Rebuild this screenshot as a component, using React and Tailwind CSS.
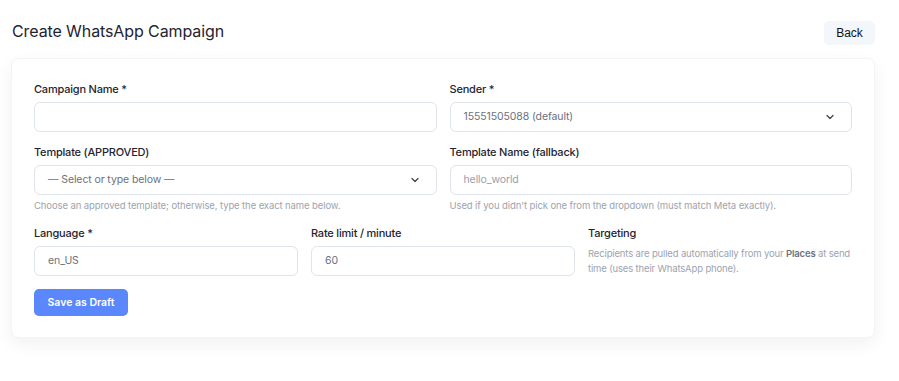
import React from "react";

const font = { fontFamily: "Inter, 'Noto Sans', sans-serif" };

function Chevron() {
  return (
    <svg width="12" height="12" viewBox="0 0 24 24" fill="none" stroke="#374151" strokeWidth="2.4" strokeLinecap="round" strokeLinejoin="round">
      <path d="M6 9l6 6 6-6" />
    </svg>
  );
}

function Label({ children }) {
  return <div className="h-[16px] mb-[5px] text-[11px] leading-[16px] font-medium text-[#1f2430] tracking-[-0.2px]">{children}</div>;
}

function Box({ children, select, placeholder }) {
  return (
    <div className="h-[30px] rounded-[6px] border border-[#dfe3ec] bg-white flex items-center justify-between pl-[13px] pr-[15px]">
      <span className={`text-[10.5px] tracking-[-0.1px] ${placeholder ? "text-[#9aa0ab]" : "text-[#6b7080]"}`}>{children}</span>
      {select && <Chevron />}
    </div>
  );
}

function Help({ children }) {
  return <div className="mt-[4px] text-[9.5px] leading-[14px] tracking-[-0.1px] text-[#9ca3af]">{children}</div>;
}

export default function App() {
  return (
    <div className="w-[899px] h-[381px] bg-white px-[11px] pt-[21px]" style={font}>
      <div className="w-[864px] flex items-start justify-between h-[24px] mb-[13px]">
        <h1 className="ml-[1px] text-[16px] leading-[20px] text-[#1f2430] font-normal tracking-[-0.1px]">Create WhatsApp Campaign</h1>
        <button className="h-[24px] w-[51px] rounded-[5px] bg-[#f3f6fa] text-[12px] text-[#111] flex items-center justify-center" style={{ fontFamily: "'Liberation Sans', Arial, sans-serif" }}>Back</button>
      </div>
      <div className="w-[864px] rounded-[7px] bg-white border border-[#f3f4f6] shadow-[0_6px_18px_rgba(15,23,42,0.06)] px-[22px] pt-[22px] pb-[21px]">
        <div className="grid grid-cols-2 gap-x-[13px] gap-y-[12px]">
          <div>
            <Label>Campaign Name *</Label>
            <Box></Box>
          </div>
          <div>
            <Label>Sender *</Label>
            <Box select>15551505088 (default)</Box>
          </div>
          <div>
            <Label>Template (APPROVED)</Label>
            <Box select>— Select or type below —</Box>
            <Help>Choose an approved template; otherwise, type the exact name below.</Help>
          </div>
          <div>
            <Label>Template Name (fallback)</Label>
            <Box placeholder>hello_world</Box>
            <Help>Used if you didn't pick one from the dropdown (must match Meta exactly).</Help>
          </div>
        </div>
        <div className="grid grid-cols-3 gap-x-[13px] mt-[12px]">
          <div>
            <Label>Language *</Label>
            <Box>en_US</Box>
          </div>
          <div>
            <Label>Rate limit / minute</Label>
            <Box>60</Box>
          </div>
          <div>
            <Label>Targeting</Label>
            <p className="mt-[6px] text-[9.5px] leading-[14.5px] tracking-[-0.15px] text-[#9ca3af]">
              Recipients are pulled automatically from your <b className="font-semibold text-[#6b7280]">Places</b> at send time (uses their WhatsApp phone).
            </p>
          </div>
        </div>
        <button className="mt-[13px] h-[27px] w-[94px] rounded-[5px] bg-[#5b87fc] text-white text-[10.5px] font-semibold">Save as Draft</button>
      </div>
    </div>
  );
}
